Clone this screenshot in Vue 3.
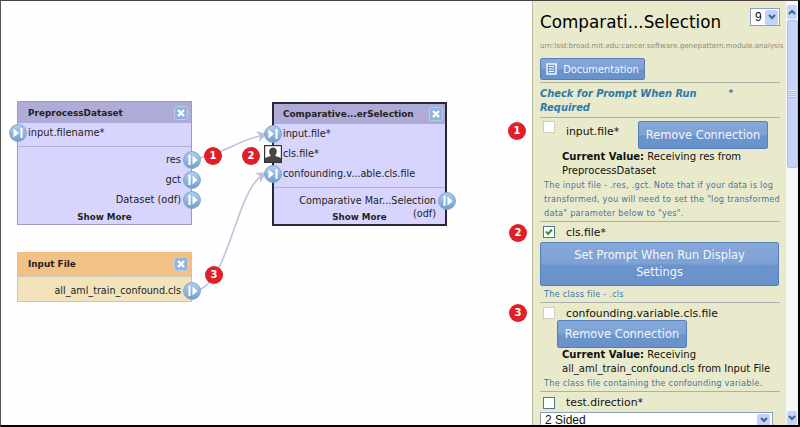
<script setup>
const nodes = [
  { id: 'pre', title: 'PreprocessDataset', inputs: [{ name: 'input.filename*', kind: 'in' }], outputs: ['res', 'gct', 'Dataset (odf)'], more: true },
  { id: 'cmp', title: 'Comparative...erSelection', inputs: [{ name: 'input.file*', kind: 'in' }, { name: 'cls.file*', kind: 'user' }, { name: 'confounding.v...able.cls.file', kind: 'in' }], outputs: ['Comparative Mar...Selection (odf)'], more: true },
  { id: 'src', title: 'Input File', inputs: [], outputs: ['all_aml_train_confound.cls'], more: false },
]
const badges = [
  { id: 'c1', n: 1 }, { id: 'c2', n: 2 }, { id: 'c3', n: 3 },
  { id: 'p1', n: 1 }, { id: 'p2', n: 2 }, { id: 'p3', n: 3 },
]
</script>

<template>
  <div class="window">
    <svg class="defs" width="0" height="0">
      <defs>
        <linearGradient id="ball" x1="0" y1="0" x2="0" y2="1">
          <stop offset="0" stop-color="#b4d0ec" /><stop offset="1" stop-color="#6f9ecf" />
        </linearGradient>
      </defs>
    </svg>

    <main class="canvas">
      <svg class="wires" width="532" height="424" viewBox="0 0 532 424">
        <g fill="none" stroke="#c3c1da" stroke-width="1.6">
          <path d="M199 158C222 155 236 141 260 136" />
          <path d="M199 290C228 280 236 195 261 176" />
        </g>
        <path d="M267 134l-11-3 4 5-1 6z" fill="#c3c1da" />
        <path d="M267 172l-12 1 5 3 0 7z" fill="#c3c1da" />
      </svg>

      <section v-for="node in nodes" :key="node.id" class="node" :class="node.id">
        <header class="node-head">
          <h2>{{ node.title }}</h2>
          <svg class="close" width="14" height="14" viewBox="0 0 14 14">
            <rect x=".5" y=".5" width="13" height="13" rx="2" fill="#8fb5de" stroke="#b4d2ee" />
            <path d="M4 4l6 6M10 4l-6 6" stroke="#fff" stroke-width="2.4" />
          </svg>
        </header>
        <div v-if="node.inputs.length" class="inputs">
          <div v-for="port in node.inputs" :key="port.name" class="port">
            <svg v-if="port.kind === 'in'" class="icon" width="18" height="18" viewBox="0 0 18 18">
              <circle cx="9" cy="9" r="8.4" fill="url(#ball)" stroke="#7aa4d2" />
              <path d="M4.500 4.500v9L10 9z" fill="#fff" /><path d="M12.500 4v10" stroke="#fff" stroke-width="2" />
            </svg>
            <svg v-else class="icon" width="18" height="18" viewBox="0 0 18 18">
              <rect x=".6" y=".6" width="16.8" height="16.8" fill="#fff" stroke="#333" stroke-width="1.2" />
              <path d="M1 17v-3.500c1-1.500 4-1.500 5.500-2.500V10C4.500 8 4.500 2.500 9 2.500S13.500 8 11.500 10v1C13 12 16 12 17 13.500V17z" fill="#454545" />
            </svg>
            <span>{{ port.name }}</span>
          </div>
        </div>
        <div class="outputs">
          <div v-for="out in node.outputs" :key="out" class="port out">
            <span>{{ out }}</span>
            <svg class="icon" width="18" height="18" viewBox="0 0 18 18">
              <circle cx="9" cy="9" r="8.400" fill="url(#ball)" stroke="#7aa4d2" />
              <path d="M6.500 4v10" stroke="#fff" stroke-width="2" /><path d="M9.500 4.500v9L14.500 9z" fill="#fff" />
            </svg>
          </div>
        </div>
        <div v-if="node.more" class="more">Show More</div>
      </section>
    </main>

    <aside class="panel">
      <div class="top">
        <div class="title-row">
          <h1>Comparati...Selection</h1>
          <div class="select version"><span>9</span><i class="drop"><svg width="8" height="6" viewBox="0 0 8 6"><path d="M1 1l3 3 3-3" /></svg></i></div>
        </div>
        <div class="lsid">urn:lsid:broad.mit.edu:cancer.software.genepattern.module.analysis</div>
        <button class="btn doc">
          <svg width="11" height="12" viewBox="0 0 11 12"><rect x="1" y="1" width="9" height="10" fill="#6e97cf" stroke="#fff" stroke-width="1.400" /><path d="M3 3.500h5M3 6h5M3 8.500h5" stroke="#fff" /></svg>
          <span>Documentation</span>
        </button>
      </div>

      <div class="legend"><span>Check for Prompt When Run<br />Required</span><b>*</b></div>

      <div class="param p-input">
        <div class="row"><i class="check off"></i><span class="name">input.file*</span><button class="btn remove">Remove Connection</button></div>
        <div class="value"><b>Current Value:</b> <span>Receiving res from</span><br />PreprocessDataset</div>
        <div class="help">The input file - .res, .gct. Note that if your data is log<br />transformed, you will need to set the "log transformed<br />data" parameter below to "yes".</div>
      </div>

      <div class="param p-cls">
        <div class="row"><i class="check"><svg width="8" height="8" viewBox="0 0 8 8"><path d="M1 3.500l2.200 2.500L7 1.500" /></svg></i><span class="name">cls.file*</span></div>
        <button class="btn prompt">Set Prompt When Run Display<br />Settings</button>
        <div class="help">The class file - .cls</div>
      </div>

      <div class="param p-conf">
        <div class="row"><i class="check off"></i><span class="name">confounding.variable.cls.file</span></div>
        <button class="btn remove">Remove Connection</button>
        <div class="value"><b>Current Value:</b> <span>Receiving</span><br />all_aml_train_confound.cls from Input File</div>
        <div class="help">The class file containing the confounding variable.</div>
      </div>

      <div class="param p-test">
        <div class="row"><i class="check"></i><span class="name">test.direction*</span></div>
        <div class="select sided"><span>2 Sided</span><i class="drop"><svg width="8" height="6" viewBox="0 0 8 6"><path d="M1 1l3 3 3-3" /></svg></i></div>
      </div>
    </aside>

    <div class="scrollbar">
      <i class="arrow"><svg width="8" height="6" viewBox="0 0 8 6"><path d="M1 5l3-3 3 3" /></svg></i>
      <div class="thumb"><i></i></div>
      <i class="arrow down"><svg width="8" height="6" viewBox="0 0 8 6"><path d="M1 1l3 3 3-3" /></svg></i>
    </div>

    <span v-for="b in badges" :key="b.id" class="badge" :class="b.id">{{ b.n }}</span>
  </div>
</template>

<style>
body { margin: 0; overflow: hidden; background: #000; }
</style>

<style scoped>
* { box-sizing: border-box; }
h1, h2 { margin: 0; font-weight: normal; }
i { font-style: normal; }
.window { position: relative; display: flex; width: 800px; height: 427px; overflow: hidden; border: solid #000; border-width: 1px 2px 2px 1px; border-top-color: #4a4040; border-left-color: #555; background: #fff; font-family: "DejaVu Sans", sans-serif; font-size: 10px; color: #222; white-space: nowrap; }
.defs { position: absolute; }
.canvas { position: relative; width: 531px; height: 424px; flex: none; background: #fefefe; }
.wires { position: absolute; left: -1px; top: -1px; }

.node { position: absolute; display: flex; flex-direction: column; background: #d7d5fe; border: 1px solid #9c9ac6; }
.pre { left: 16px; top: 100px; width: 175px; height: 124px; }
.cmp { left: 271px; top: 101px; width: 175px; height: 124px; border: 2px solid #29283a; }
.src { left: 16px; top: 251px; width: 175px; height: 50px; border-color: #efbd80; background: #f3e3bb; }
.node-head { display: flex; flex: none; align-items: center; justify-content: space-between; height: 21px; padding: 0 3px 0 10px; background: #aeabd6; }
.src .node-head { height: 22px; background: #f1c187; }
.cmp .node-head { height: 20px; padding: 0 2px 0 9px; }
.node-head h2 { font-size: 8.900px; font-weight: bold; line-height: 20px; }
.inputs { flex: none; border-bottom: 1px solid #b0aedb; }
.pre .inputs { height: 24px; }
.cmp .inputs { height: 64px; }
.port { display: flex; align-items: center; height: 20px; gap: 1px; margin-left: -9px; font-size: 9.900px; line-height: 20px; }
.port .icon { flex: none; }
.out { justify-content: flex-end; margin: 0 -10px 0 0; gap: 2px; }
.pre .outputs { padding-top: 3px; }
.cmp .port { margin-left: -10px; gap: 1px; font-size: 9.700px; }
.cmp .out { height: 26px; align-items: flex-start; padding-top: 4px; margin: 0 -11px 0 0; gap: 2px; }
.cmp .out span { width: 142px; white-space: normal; text-align: right; line-height: 13px; padding-top: 2px; }
.src .port { font-size: 9.600px; }
.src .outputs { padding-top: 4px; border-top: 2px solid #cdc9b8; }
.more { position: absolute; left: 0; right: 0; bottom: 1px; font-size: 8.700px; line-height: 11px; font-weight: bold; text-align: center; }

.panel { flex: none; width: 254px; height: 424px; padding: 0 6px 0 7px; overflow: hidden; background: #e9eacb; border-left: 1px solid #b9b99c; color: #111; }
.top { display: flex; flex-direction: column; height: 82px; border-bottom: 1px solid #abb0a5; }
.title-row { display: flex; justify-content: space-between; height: 37px; padding-top: 7px; }
.title-row h1 { font-size: 16.800px; line-height: 29px; color: #000; }
.select { display: flex; align-items: center; justify-content: space-between; border: 1px solid #8ca0b4; background: #fff; font-family: "Liberation Sans", sans-serif; font-size: 12px; }
.version { width: 30px; height: 18px; padding: 0 1px 0 4px; }
.drop { display: flex; align-items: center; justify-content: center; width: 13px; height: 15px; border-radius: 2px; background: #c2d3fb; }
.drop path, .arrow path { fill: none; stroke: #46608c; stroke-width: 2; }
.lsid { height: 20px; font-size: 7.120px; line-height: 15px; color: #8b8b7c; }
.btn { display: flex; align-items: center; justify-content: center; margin: 0; padding: 0; border: 1px solid #567fb9; border-radius: 2px; background: linear-gradient(#86a8d9 0%, #7ea2d5 48%, #6b94cb 54%, #6991cb 100%); color: #f2f6ff; font-family: inherit; font-size: 11.400px; }
.doc { width: 105px; height: 22px; gap: 6px; font-size: 9.800px; }
.legend { display: flex; height: 35px; padding-top: 4px; border-bottom: 1px solid #abb0a5; font-size: 9.900px; font-style: italic; font-weight: bold; line-height: 14px; color: #2e79a8; }
.legend b { margin-left: 32px; font-size: 9px; line-height: 12px; }
.param { border-bottom: 1px solid #a9b0b0; }
.row { display: flex; align-items: center; }
.check { display: flex; flex: none; align-items: center; justify-content: center; width: 12px; height: 12px; margin-left: 3px; border: 1px solid #547688; background: #fff; }
.check path { fill: none; stroke: #2a9a2a; stroke-width: 2; }
.check.off { border-color: #d0cfbc; }
.name { margin-left: 11px; font-size: 10.800px; }
.value { padding-left: 22px; font-size: 10.050px; line-height: 14px; }
.help { padding-left: 4px; font-size: 8.200px; letter-spacing: .23px; line-height: 14px; color: #4676aa; }
.remove { width: 130px; height: 28px; }
.p-input { height: 104px; padding-top: 3px; }
.p-input .row { height: 29px; align-items: flex-start; }
.p-input .name { width: 72px; line-height: 22px; }
.p-cls { height: 81px; }
.p-cls .row { height: 20px; }
.prompt { width: 239px; height: 44px; line-height: 17px; }
.p-cls .help { padding-top: 1px; }
.p-conf { height: 89px; }
.p-conf .row { height: 17px; padding-top: 3px; }
.p-conf .remove { margin-left: 17px; }
.p-test .row { height: 20px; padding-top: 1px; }
.sided { width: 233px; height: 16px; padding: 0 2px 0 4px; }
.sided .drop { height: 13px; }

.scrollbar { display: flex; flex-direction: column; width: 12px; height: 424px; padding: 4px 0 0 1px; background: #f7f7f8; }
.arrow { display: flex; flex: none; align-items: center; justify-content: center; width: 10px; height: 14px; border-radius: 2px; background: #c5d4fb; }
.down { margin-top: auto; }
.thumb { display: flex; flex: 0 0 148px; align-items: center; justify-content: center; width: 11px; margin-top: 1px; border: 1px solid #adc0ee; border-radius: 2px; background: #c6d4fb; }
.thumb i { width: 5px; height: 8px; background: repeating-linear-gradient(#e6eeff 0 1px, #a5b9ec 1px 2px); }

.badge { position: absolute; width: 18px; height: 18px; border-radius: 50%; background: #df2029; color: #fff; font-size: 10px; font-weight: bold; line-height: 18px; text-align: center; }
.c1 { left: 203px; top: 146px; }
.c2 { left: 241px; top: 146px; }
.c3 { left: 204px; top: 265px; }
.p1 { left: 507px; top: 121px; }
.p2 { left: 508px; top: 223px; }
.p3 { left: 508px; top: 303px; }
</style>
